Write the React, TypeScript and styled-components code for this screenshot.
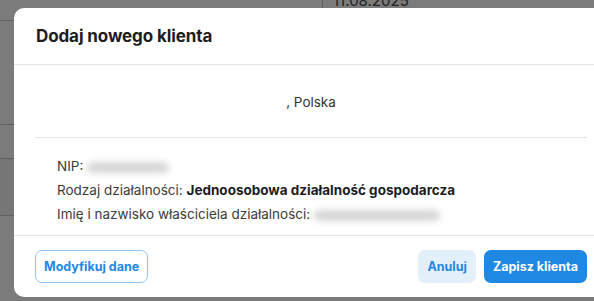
import React from "react"
import styled, { createGlobalStyle } from "styled-components"

const GlobalStyle = createGlobalStyle`
  html, body {
    margin: 0;
    padding: 0;
    width: 594px;
    height: 301px;
    overflow: hidden;
    background: #7b7b7b;
    font-family: Inter, "Noto Sans", sans-serif;
  }
`

const StyledPage = styled.div`
  position: relative;
  width: 594px;
  height: 301px;
  overflow: hidden;
`

const StyledBackdrop = styled.div`
  display: flex;
  flex-direction: column;
  height: 100%;
`

const StyledTopBar = styled.div`
  display: flex;
  height: 20px;
  border-bottom: 1px solid #5f5f5f;
`

const StyledDateCell = styled.div`
  margin-left: 322px;
  padding-left: 10px;
  border-left: 1px solid #5f5f5f;
  height: 8px;
  display: flex;
  align-items: flex-end;
  font-size: 15px;
  line-height: 15px;
  color: #222222;
  overflow: hidden;
`

const StyledBackdropRow = styled.div<{ $height: number; $shaded?: boolean }>`
  height: ${({ $height }) => $height}px;
  border-bottom: 1px solid #5f5f5f;
  background: ${({ $shaded }) => ($shaded ? "#767676" : "transparent")};
`

const StyledModal = styled.div`
  position: absolute;
  left: 14px;
  top: 8px;
  width: 594px;
  height: 289px;
  background: #ffffff;
  border-radius: 10px;
  display: flex;
  flex-direction: column;
`

const StyledHeader = styled.div`
  height: 56px;
  padding: 0 22px;
  display: flex;
  align-items: center;
  border-bottom: 1px solid #e4e4e4;
`

const StyledTitle = styled.h2`
  margin: 0;
  font-size: 17px;
  font-weight: 700;
  color: #1d1d1f;
  letter-spacing: -0.1px;
`

const StyledBody = styled.div`
  flex: 1;
  padding: 0 21px;
  display: flex;
  flex-direction: column;
`

const StyledAddress = styled.div`
  height: 71px;
  display: flex;
  align-items: center;
  justify-content: center;
  border-bottom: 1px solid #e4e4e4;
  font-size: 13.5px;
  color: #333333;
  padding-top: 1px;
`

const StyledDetails = styled.div`
  padding: 16px 22px 0;
  display: flex;
  flex-direction: column;
`

const StyledDetailLine = styled.div`
  font-size: 13.5px;
  line-height: 24px;
  color: #3a3a3a;
  white-space: nowrap;
`

const StyledStrong = styled.span`
  font-weight: 700;
  color: #1d1d1f;
`

const StyledRedacted = styled.span<{ $width: number }>`
  display: inline-block;
  width: ${({ $width }) => $width}px;
  height: 11px;
  margin-left: 4px;
  vertical-align: middle;
  border-radius: 6px;
  background: #d6d6d6;
  filter: blur(3px);
`

const StyledFooter = styled.div`
  height: 61px;
  padding: 0 21px;
  border-top: 1px solid #e4e4e4;
  display: flex;
  align-items: center;
  gap: 8px;
`

const StyledSpacer = styled.div`
  flex: 1;
`

const StyledButton = styled.button<{ $variant: "outline" | "soft" | "solid" }>`
  height: 33px;
  padding: 0 8px;
  border-radius: 7px;
  font-family: inherit;
  font-size: 12.5px;
  font-weight: 700;
  cursor: pointer;
  border: 1px solid
    ${({ $variant }) => ($variant === "outline" ? "#8fc3f0" : "transparent")};
  background: ${({ $variant }) =>
    $variant === "solid" ? "#1f88e2" : $variant === "soft" ? "#e3f0fb" : "#ffffff"};
  color: ${({ $variant }) => ($variant === "solid" ? "#ffffff" : "#1f88e2")};
`

export default function App() {
  return (
    <StyledPage>
      <GlobalStyle />
      <StyledBackdrop>
        <StyledTopBar>
          <StyledDateCell>11.08.2025</StyledDateCell>
        </StyledTopBar>
        <StyledBackdropRow $height={103} />
        <StyledBackdropRow $height={33} />
        <StyledBackdropRow $height={56} $shaded />
      </StyledBackdrop>

      <StyledModal>
        <StyledHeader>
          <StyledTitle>Dodaj nowego klienta</StyledTitle>
        </StyledHeader>
        <StyledBody>
          <StyledAddress>, Polska</StyledAddress>
          <StyledDetails>
            <StyledDetailLine>
              NIP:
              <StyledRedacted $width={82} />
            </StyledDetailLine>
            <StyledDetailLine>
              Rodzaj działalności:{" "}
              <StyledStrong>Jednoosobowa działalność gospodarcza</StyledStrong>
            </StyledDetailLine>
            <StyledDetailLine>
              Imię i nazwisko właściciela działalności:
              <StyledRedacted $width={126} />
            </StyledDetailLine>
          </StyledDetails>
        </StyledBody>
        <StyledFooter>
          <StyledButton $variant="outline">Modyfikuj dane</StyledButton>
          <StyledSpacer />
          <StyledButton $variant="soft">Anuluj</StyledButton>
          <StyledButton $variant="solid">Zapisz klienta</StyledButton>
        </StyledFooter>
      </StyledModal>
    </StyledPage>
  )
}
